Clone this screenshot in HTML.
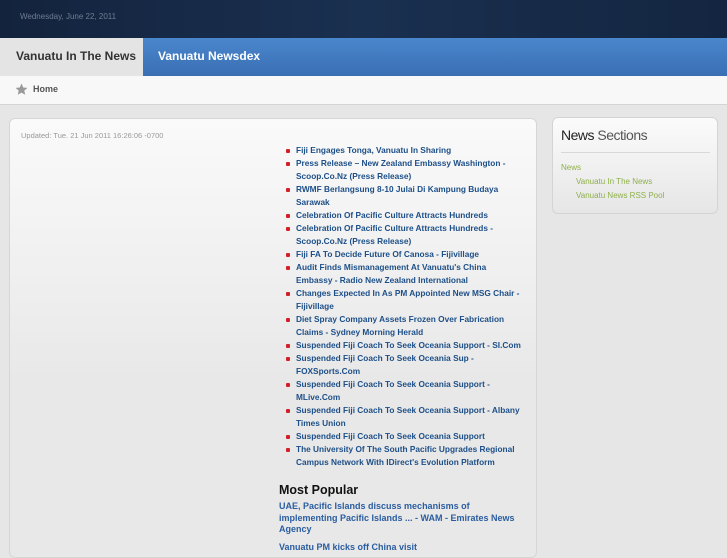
<!DOCTYPE html>
<html><head><meta charset="utf-8"><style>
*{margin:0;padding:0;box-sizing:border-box}
body{width:727px;height:545px;overflow:hidden;background:#e6e6e6;font-family:"Liberation Sans",sans-serif;position:relative}
#top{position:absolute;left:0;top:0;width:727px;height:39px;background:linear-gradient(90deg,#13233d,#1a3050 50%,#132540);}
#date{position:absolute;left:20px;top:12px;font-size:8px;color:#6f7d92}
#nav{position:absolute;left:0;top:38px;width:727px;height:38px;background:linear-gradient(#4a86cc,#3a6fb4)}
#t1{position:absolute;left:0;top:0;width:143px;height:38px;background:#e4e4e4;color:#333;font-weight:bold;font-size:12px;line-height:36px;padding-left:16px}
#t2{position:absolute;left:158px;top:0;color:#fff;font-weight:bold;font-size:12px;line-height:36px}
#crumb{position:absolute;left:0;top:76px;width:727px;height:29px;background:#f8f8f8;border-bottom:1px solid #d4d4d4}
#crumb span{position:absolute;left:33px;top:8px;font-size:9px;font-weight:bold;color:#555}
#main{position:absolute;left:9px;top:118px;width:528px;height:440px;border:1px solid #d6d6d6;border-radius:6px;background:linear-gradient(#fafafa,#e8e8e8 60%)}
#upd{position:absolute;left:11px;top:12px;font-size:7.5px;color:#999}
ul{position:absolute;left:275px;top:25px;width:238px;list-style:none}
li{font-size:8.3px;font-weight:bold;color:#1d4f88;line-height:13px;padding-left:11px;position:relative}
li:before{content:"";position:absolute;left:1px;top:5px;width:4px;height:4px;background:#d2202a;border-radius:1px}
#mp{position:absolute;left:269px;top:364px;font-size:12.5px;font-weight:bold;color:#111}
#mpl{position:absolute;left:269px;top:382px;width:250px;font-size:9px;font-weight:bold;color:#2a5da0;line-height:11.5px}
#side{position:absolute;left:552px;top:117px;width:166px;height:97px;border:1px solid #d4d4d4;border-radius:6px;background:linear-gradient(#fbfbfb,#e6e6e6)}
#side h2{position:absolute;left:8px;top:9px;font-size:14px;font-weight:normal;color:#555;letter-spacing:-0.5px}
#side h2 b{font-weight:normal;color:#222}
#side hr{position:absolute;left:8px;top:34px;width:149px;border:0;border-top:1px solid #d8d8d8}
.g{position:absolute;font-size:8px;color:#8fb04a}
</style></head><body>
<div id="top"><div id="date">Wednesday, June 22, 2011</div></div>
<div id="nav"><div id="t1">Vanuatu In The News</div><div id="t2">Vanuatu Newsdex</div></div>
<div id="crumb"><svg style="position:absolute;left:15px;top:7px" width="13" height="13" viewBox="0 0 24 24"><path d="M12 1l3.2 7.2 7.8.7-5.9 5.2 1.8 7.7L12 17.8 5.1 21.8l1.8-7.7L1 8.9l7.8-.7z" fill="#999"/></svg><span>Home</span></div>
<div id="main"><div id="upd">Updated: Tue. 21 Jun 2011 16:26:06 -0700</div>
<ul>
<li>Fiji Engages Tonga, Vanuatu In Sharing</li>
<li>Press Release – New Zealand Embassy Washington - Scoop.Co.Nz (Press Release)</li>
<li>RWMF Berlangsung 8-10 Julai Di Kampung Budaya Sarawak</li>
<li>Celebration Of Pacific Culture Attracts Hundreds</li>
<li>Celebration Of Pacific Culture Attracts Hundreds - Scoop.Co.Nz (Press Release)</li>
<li>Fiji FA To Decide Future Of Canosa - Fijivillage</li>
<li>Audit Finds Mismanagement At Vanuatu's China Embassy - Radio New Zealand International</li>
<li>Changes Expected In As PM Appointed New MSG Chair - Fijivillage</li>
<li>Diet Spray Company Assets Frozen Over Fabrication Claims - Sydney Morning Herald</li>
<li>Suspended Fiji Coach To Seek Oceania Support - SI.Com</li>
<li>Suspended Fiji Coach To Seek Oceania Sup - FOXSports.Com</li>
<li>Suspended Fiji Coach To Seek Oceania Support - MLive.Com</li>
<li>Suspended Fiji Coach To Seek Oceania Support - Albany Times Union</li>
<li>Suspended Fiji Coach To Seek Oceania Support</li>
<li>The University Of The South Pacific Upgrades Regional Campus Network With IDirect's Evolution Platform</li>
</ul>
<div id="mp">Most Popular</div>
<div id="mpl">UAE, Pacific Islands discuss mechanisms of implementing Pacific Islands ... - WAM - Emirates News Agency<br><div style="margin-top:6px">Vanuatu PM kicks off China visit</div></div>
</div>
<div id="side"><h2><b>News</b> Sections</h2><hr>
<div class="g" style="left:8px;top:45px">News</div>
<div class="g" style="left:23px;top:59px">Vanuatu In The News</div>
<div class="g" style="left:23px;top:73px">Vanuatu News RSS Pool</div></div>
</body></html>
